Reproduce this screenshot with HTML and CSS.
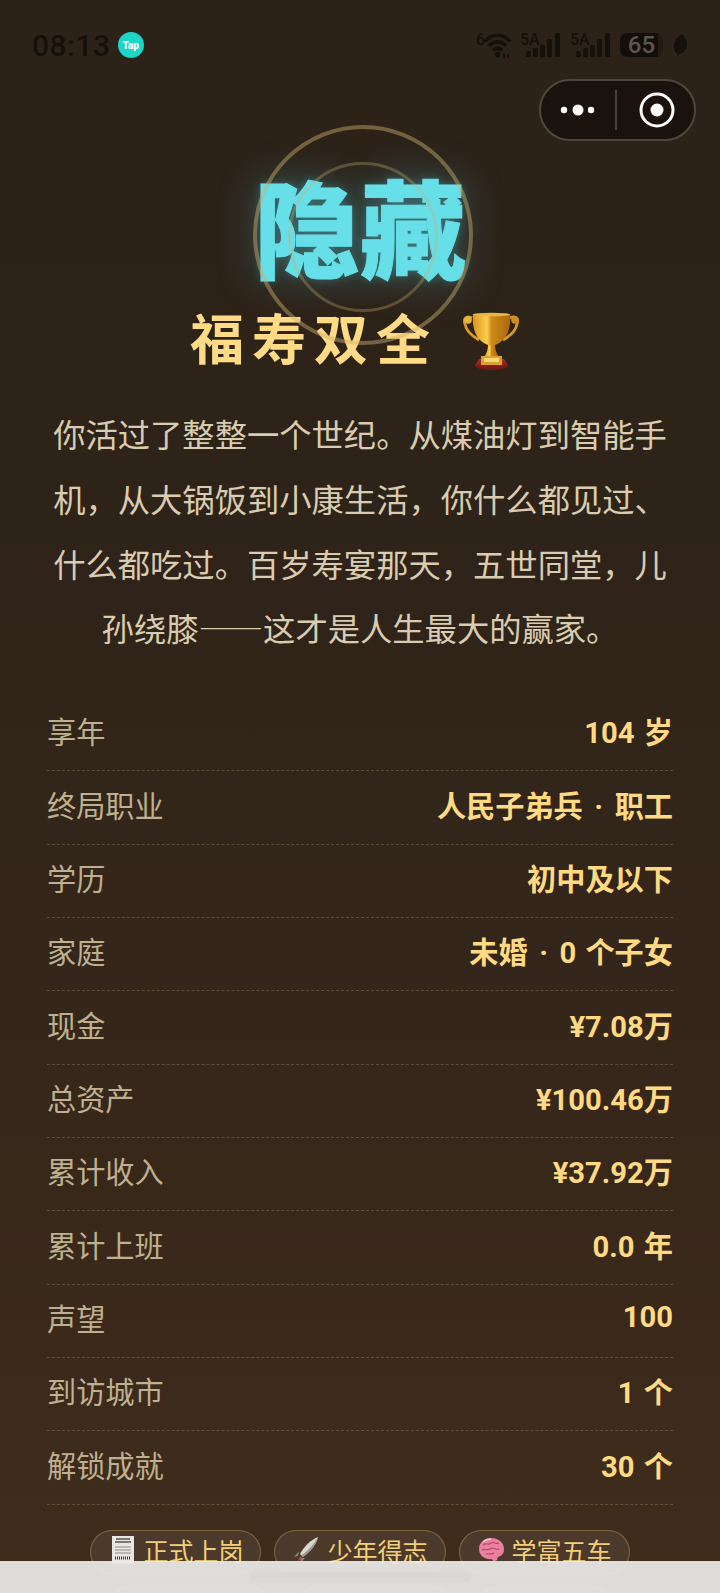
FILE: index.html
```html
<!DOCTYPE html>
<html lang="zh-CN">

<head>
    <meta charset="UTF-8">
    <meta name="viewport" content="width=device-width, initial-scale=1.0">
    <title>福寿双全</title>
    <link rel="stylesheet" href="styles.css">
</head>

<body>

    <div class="status">
        <span class="time">08:13</span>
        <span class="tap">Tap</span>
        <div class="status-icons">
            <svg class="wifi" width="36" height="35" viewBox="0 -4 36 35">
                <text x="0" y="13" class="icon-text">6</text>
                <path d="M9 9.500a15.500 15.500 0 0 1 25 0" fill="none" stroke="#14100a" stroke-width="3.500"/>
                <path d="M13 14a10.500 10.500 0 0 1 17 0" fill="none" stroke="#14100a" stroke-width="3.500"/>
                <path d="M17 18.500a5.500 5.500 0 0 1 9 0" fill="none" stroke="#14100a" stroke-width="3.500"/>
                <circle cx="21.500" cy="22.500" r="2.800" fill="#14100a"/>
                <path d="M28 22v4M32 22v4" stroke="#14100a" stroke-width="1.800"/>
            </svg>
            <svg class="signal" width="42" height="34" viewBox="0 -4 42 34">
                <text x="0" y="13" class="icon-text">5A</text>
                <rect x="6" y="19" width="5" height="6" rx="1.500"/>
                <rect x="13" y="16" width="5" height="9" rx="1.500"/>
                <rect x="20" y="13" width="5" height="12" rx="1.500"/>
                <rect x="27" y="7" width="5" height="18" rx="1.500"/>
                <rect x="35" y="1" width="5" height="24" rx="1.500"/>
            </svg>
            <svg class="signal" width="42" height="34" viewBox="0 -4 42 34">
                <text x="0" y="13" class="icon-text">5A</text>
                <rect x="6" y="19" width="5" height="6" rx="1.500"/>
                <rect x="13" y="16" width="5" height="9" rx="1.500"/>
                <rect x="20" y="13" width="5" height="12" rx="1.500"/>
                <rect x="27" y="7" width="5" height="18" rx="1.500"/>
                <rect x="35" y="1" width="5" height="24" rx="1.500"/>
            </svg>
            <div class="battery"><span>65</span></div>
            <svg class="leaf" width="15" height="22" viewBox="0 0 15 22">
                <path d="M9 0C3 4 0 9 1 15c.4 2.500 2 4 3.500 5L4 22l1.500-.5L6 20c5-1 8-5 8-10 0-4-2-7-5-10z" fill="#14100a"/>
            </svg>
        </div>
    </div>

    <div class="capsule-row">
        <div class="capsule">
            <svg class="capsule-more" width="74" height="14" viewBox="0 0 74 14">
                <circle cx="23" cy="7" r="3.200" fill="#fff"/>
                <circle cx="37" cy="7" r="5.500" fill="#fff"/>
                <circle cx="50" cy="7" r="3.200" fill="#fff"/>
            </svg>
            <div class="capsule-line"></div>
            <svg class="capsule-target" width="38" height="38" viewBox="0 0 38 38">
                <circle cx="19" cy="19" r="16" fill="none" stroke="#fff" stroke-width="3"/>
                <circle cx="19" cy="19" r="6.500" fill="#fff"/>
            </svg>
        </div>
    </div>

    <div class="hero">
        <h1 class="rank">隐藏</h1>
        <div class="ring ring-outer"></div>
        <div class="ring ring-inner"></div>
    </div>

    <div class="ending">
        <span class="ending-name">福寿双全</span>
        <svg class="trophy" width="57" height="59" viewBox="0 0 57 59">
            <defs>
                <linearGradient id="cupGold" x1="0" x2="1" y1="0" y2="0">
                    <stop offset="0" stop-color="#d8951f"/>
                    <stop offset=".38" stop-color="#fbcf50"/>
                    <stop offset=".5" stop-color="#d08a18"/>
                    <stop offset="1" stop-color="#a9680c"/>
                </linearGradient>
                <linearGradient id="baseRed" x1="0" x2="0" y1="0" y2="1">
                    <stop offset="0" stop-color="#a92a24"/>
                    <stop offset="1" stop-color="#6e1414"/>
                </linearGradient>
            </defs>
            <path d="M9 6C3 3 0 7 2 12c1 6 7 12 14 16M47 6c6-3 9 1 7 6-1 6-7 12-14 16" fill="none" stroke="#d79a26" stroke-width="2.800"/>
            <circle cx="5" cy="8" r="3.800" fill="#e8b43e"/>
            <circle cx="52" cy="8" r="3.800" fill="#c98d22"/>
            <path d="M10 2h37c1 10-1 20-7 26-3 3-6 4-8 5h-7c-2-1-5-2-8-5-6-6-8-16-7-26z" fill="url(#cupGold)"/>
            <ellipse cx="28.500" cy="2.500" rx="18.500" ry="1.800" fill="#e9b93f"/>
            <path d="M25 33h7c0 4 1 8 4 12H21c3-4 4-8 4-12z" fill="url(#cupGold)"/>
            <rect x="18" y="44" width="21" height="9" fill="#d9a02e"/>
            <rect x="21" y="46" width="15" height="4" fill="#f7d774"/>
            <path d="M18 47h-2l-4 6c0 3 7 5 16.500 5S45 56 45 53l-4-6h-2v6H18z" fill="url(#baseRed)"/>
        </svg>
    </div>

    <p class="story">你活过了整整一个世纪。从煤油灯到智能手机，从大锅饭到小康生活，你什么都见过、什么都吃过。百岁寿宴那天，五世同堂，儿孙绕膝——这才是人生最大的赢家。</p>

    <div class="stats">
        <div class="stat"><span class="stat-label">享年</span><span class="stat-value">104 岁</span></div>
        <div class="stat"><span class="stat-label">终局职业</span><span class="stat-value">人民子弟兵<span class="dot">·</span>职工</span></div>
        <div class="stat"><span class="stat-label">学历</span><span class="stat-value">初中及以下</span></div>
        <div class="stat"><span class="stat-label">家庭</span><span class="stat-value">未婚<span class="dot">·</span>0 个子女</span></div>
        <div class="stat"><span class="stat-label">现金</span><span class="stat-value">¥7.08万</span></div>
        <div class="stat"><span class="stat-label">总资产</span><span class="stat-value">¥100.46万</span></div>
        <div class="stat"><span class="stat-label">累计收入</span><span class="stat-value">¥37.92万</span></div>
        <div class="stat"><span class="stat-label">累计上班</span><span class="stat-value">0.0 年</span></div>
        <div class="stat"><span class="stat-label">声望</span><span class="stat-value">100</span></div>
        <div class="stat"><span class="stat-label">到访城市</span><span class="stat-value">1 个</span></div>
        <div class="stat"><span class="stat-label">解锁成就</span><span class="stat-value">30 个</span></div>
    </div>

    <div class="badges">
        <div class="badge-row">
            <span class="badge">
                <svg class="badge-icon" width="28" height="28" viewBox="0 0 28 28">
                    <path d="M4 0h22v28l-2-1-2 1-2-1-2 1-2-1-2 1-2-1-2 1-2-1-2 1-2-1z" fill="#e8e6e1"/>
                    <path d="M8 3h14M7 6h16" stroke="#55534f" stroke-width="1.500"/>
                    <path d="M7 11h16M7 14h16M7 17h16" stroke="#8d8b86" stroke-width="1"/>
                    <path d="M7 22h16" stroke="#3d3b38" stroke-width="3" stroke-dasharray="1 1"/>
                </svg>
                正式上岗
            </span>
            <span class="badge">
                <svg class="badge-icon" width="28" height="28" viewBox="0 0 28 28">
                    <path d="M26 1C19 4 13 9 8 18l3 3C19 15 24 9 26 1z" fill="#d9d7d2"/>
                    <path d="M26 1c-2 8-7 14-15 20l-1-2C17 14 22 8 26 1z" fill="#9b9892"/>
                    <path d="M7 15l-5 6 4-1zM13 22l-5 5 1-5z" fill="#8b8880"/>
                    <path d="M8 20l-2 5 4-3z" fill="#c9463d"/>
                </svg>
                少年得志
            </span>
            <span class="badge">
                <svg class="badge-icon" width="28" height="28" viewBox="0 0 28 28">
                    <path d="M2 13C2 6 8 2 14 2c7 0 13 4 13 11 0 4-2 7-6 8l-1 3c-2 2-5 1-5-1-5 1-13-2-13-10z" fill="#ea7f9f"/>
                    <path d="M6 9c3-3 5 1 8-2 3-2 5 2 8 0M5 14c3-2 5 1 8-1 3-3 6 2 9 0M9 18c3-1 5 1 8-1" fill="none" stroke="#b8486d" stroke-width="1.200"/>
                    <path d="M6 6c2-2 5-3 8-3" fill="none" stroke="#f9c3d2" stroke-width="1.500"/>
                </svg>
                学富五车
            </span>
        </div>
        <div class="badge-row badge-row-next">
            <span class="badge badge-a"></span>
            <span class="badge badge-b"></span>
            <span class="badge badge-c"></span>
        </div>
    </div>

    <div class="home-bar"><div class="home-handle"></div></div>

</body>

</html>
```

FILE: styles.css
```css
html,
body {
    margin: 0;
    padding: 0;
}

body {
    position: relative;
    width: 720px;
    height: 1593px;
    overflow: hidden;
    background: linear-gradient(#2c2218 0%, #2e2319 30%, #34261a 60%, #3f2c1c 100%);
    font-family: "Roboto", "Noto Sans CJK SC", sans-serif;
}

/* Barre d'etat */
.status {
    display: flex;
    align-items: center;
    height: 79px;
    box-sizing: border-box;
    padding: 11px 32px 0;
}

.time {
    font-size: 30px;
    font-weight: 500;
    letter-spacing: 0.5px;
    color: #15100a;
}

.tap {
    display: flex;
    align-items: center;
    justify-content: center;
    width: 26px;
    height: 26px;
    margin-left: 7px;
    border-radius: 50%;
    background: #1bd6c6;
    color: #fff;
    font-size: 10px;
    font-weight: 900;
}

.status-icons {
    display: flex;
    align-items: center;
    margin-left: auto;
    gap: 8px;
}

.icon-text {
    font-family: "Roboto", sans-serif;
    font-size: 16px;
    font-weight: 500;
    fill: #14100a;
}

.signal rect {
    fill: #14100a;
}

.battery {
    display: flex;
    align-items: center;
    justify-content: center;
    width: 43px;
    height: 24px;
    border-radius: 7px;
    background: linear-gradient(90deg, #120e09 88%, #241b12 88%);
    color: #5d554a;
    font-size: 24px;
    font-weight: 500;
}

.leaf {
    margin-left: 2px;
}

/* Capsule */
.capsule-row {
    display: flex;
    justify-content: flex-end;
    padding-right: 24px;
}

.capsule {
    display: flex;
    align-items: center;
    width: 157px;
    height: 62px;
    box-sizing: border-box;
    border: 2px solid #4f473d;
    border-radius: 31px;
    background: #1a130d;
}

.capsule-more {
    flex: none;
}

.capsule-line {
    width: 2px;
    height: 40px;
    background: #4a433a;
}

.capsule-target {
    margin-left: 21px;
}

/* Titre */
.hero {
    position: relative;
    margin-top: 30px;
}

.rank {
    margin: 0;
    text-align: center;
    font-family: "Noto Sans CJK SC", sans-serif;
    font-size: 106px;
    font-weight: 900;
    line-height: 106px;
    padding-bottom: 2px;
    color: #66dfe8;
    -webkit-text-stroke: 1px #66dfe8;
    text-shadow: 0 0 10px rgba(90, 220, 240, 0.3), 0 0 40px rgba(80, 220, 240, 0.35);
}

.ring {
    position: absolute;
    box-sizing: border-box;
    border-radius: 50%;
    border: 4px solid rgba(205, 175, 110, 0.45);
}

.ring-outer {
    left: 253px;
    top: -46px;
    width: 220px;
    height: 220px;
}

.ring-inner {
    left: 288px;
    top: -9px;
    width: 150px;
    height: 150px;
    border-width: 3px;
    border-color: rgba(205, 175, 110, 0.32);
}

.ending {
    display: flex;
    align-items: center;
    justify-content: center;
    gap: 25px;
    height: 60px;
    margin-top: 27px;
    padding-right: 10px;
}

.ending-name {
    font-family: "Noto Sans CJK SC", sans-serif;
    font-size: 54px;
    font-weight: 700;
    letter-spacing: 8px;
    color: #ffdb85;
}

.trophy {
    margin-top: 10px;
}

/* Texte */
.story {
    margin: 35px 47px 0;
    font-family: "Noto Sans CJK SC", sans-serif;
    font-size: 32.3px;
    line-height: 64.8px;
    text-align: center;
    color: #d9ccb0;
}

/* Lignes de stats */
.stats {
    margin: 37.8px 47px 0;
}

.stat {
    display: flex;
    align-items: center;
    justify-content: space-between;
    height: 73.35px;
    box-sizing: border-box;
    padding-bottom: 8px;
    border-bottom: 1px dashed rgba(200, 175, 130, 0.28);
    font-size: 29.2px;
}

.stat-label {
    color: #bfb08f;
}

.stat-value {
    font-weight: 700;
    word-spacing: 2px;
    color: #ffda82;
}

.dot {
    margin: 0 11.5px;
}

/* Badges */
.badges {
    margin-top: 25px;
}

.badge-row {
    display: flex;
    justify-content: center;
    gap: 13px;
}

.badge-row-next {
    margin-top: 12px;
    gap: 24px;
}

.badge {
    display: inline-flex;
    align-items: center;
    height: 44px;
    box-sizing: border-box;
    padding: 0 17px 3px 17px;
    border: 1.5px solid rgba(230, 190, 110, 0.35);
    border-radius: 22px;
    background: rgba(255, 255, 255, 0.07);
    font-family: "Noto Sans CJK SC", sans-serif;
    font-size: 25px;
    color: #f4cf77;
    white-space: nowrap;
}

.badge-icon {
    flex: none;
    margin-right: 7px;
}

.badge-a {
    width: 163px;
}

.badge-b {
    width: 158px;
}

.badge-c {
    width: 136px;
}

/* Barre du bas */
.home-bar {
    position: absolute;
    left: 0;
    right: 0;
    bottom: 0;
    height: 32px;
    background: rgba(236, 235, 233, 0.92);
}

.home-handle {
    width: 221px;
    height: 10px;
    margin: 11px auto 0;
    border-radius: 5px;
    background: #d9d8d6;
}
```
